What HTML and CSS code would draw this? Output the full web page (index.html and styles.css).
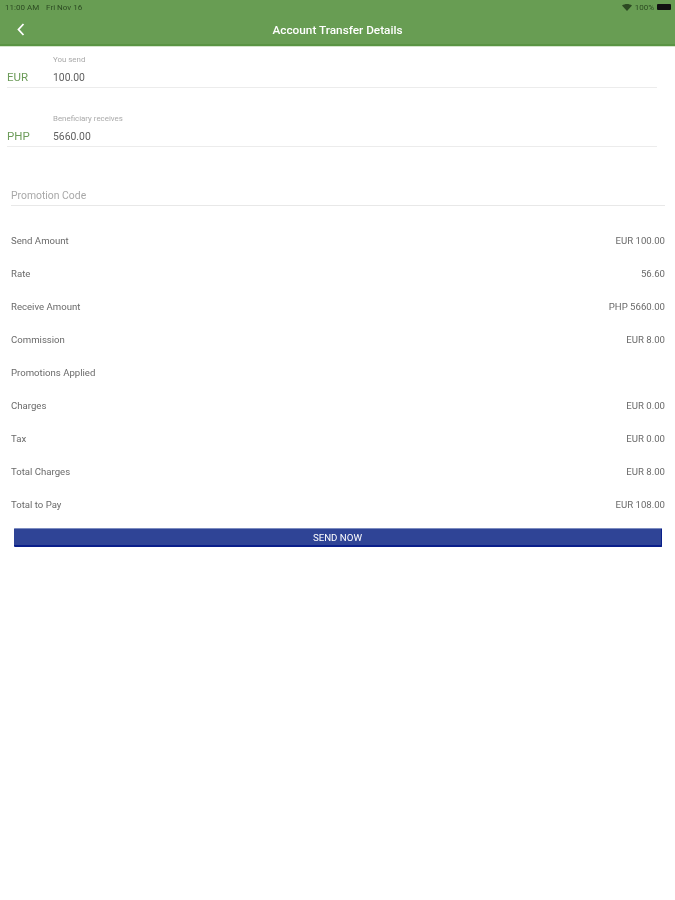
FILE: index.html
```html
<!DOCTYPE html>
<html lang="en">
<head>
<meta charset="utf-8">
<title>Account Transfer Details</title>
<link rel="stylesheet" href="styles.css">
</head>
<body>
<header class="appbar">
  <div class="status">
    <div class="status-left"><span>11:00 AM</span><span>Fri Nov 16</span></div>
    <div class="status-right">
      <svg class="wifi" width="10" height="7" viewBox="0 0 10 7"><path d="M0 1.5C3 -.5 7 -.5 10 1.5L5 7Z" fill="#2c4a22"/></svg>
      <span>100%</span>
      <span class="battery"></span>
    </div>
  </div>
  <div class="navrow">
    <svg class="back" width="8" height="13" viewBox="0 0 8 13"><path d="M6.5 1L1.5 6.5L6.5 12" fill="none" stroke="#fff" stroke-width="1.8"/></svg>
    <h1 class="title">Account Transfer Details</h1>
  </div>
</header>
<main>
  <section class="currency first">
    <span class="code">EUR</span>
    <div class="field">
      <div class="field-label">You send</div>
      <div class="field-value">100.00</div>
    </div>
  </section>
  <section class="currency second">
    <span class="code">PHP</span>
    <div class="field">
      <div class="field-label">Beneficiary receives</div>
      <div class="field-value">5660.00</div>
    </div>
  </section>
  <div class="promo">Promotion Code</div>
  <dl class="rows">
    <div class="row"><dt>Send Amount</dt><dd>EUR 100.00</dd></div>
    <div class="row"><dt>Rate</dt><dd>56.60</dd></div>
    <div class="row"><dt>Receive Amount</dt><dd>PHP 5660.00</dd></div>
    <div class="row"><dt>Commission</dt><dd>EUR 8.00</dd></div>
    <div class="row"><dt>Promotions Applied</dt><dd></dd></div>
    <div class="row"><dt>Charges</dt><dd>EUR 0.00</dd></div>
    <div class="row"><dt>Tax</dt><dd>EUR 0.00</dd></div>
    <div class="row"><dt>Total Charges</dt><dd>EUR 8.00</dd></div>
    <div class="row"><dt>Total to Pay</dt><dd>EUR 108.00</dd></div>
  </dl>
  <button class="send" type="button">SEND NOW</button>
</main>
</body>
</html>
```
FILE: styles.css
```css
* { box-sizing: border-box; }
html, body { margin: 0; padding: 0; }
body { width: 675px; height: 900px; background: #fff; font-family: Roboto, "Liberation Sans", sans-serif; overflow: hidden; filter: blur(0.4px); }
.appbar { height: 46px; background: #689d53; border-bottom: 2px solid #5a9444; box-shadow: 0 1px 0 #d5e6cd; }
.status { height: 14px; padding: 0 4px 0 5px; display: flex; justify-content: space-between; align-items: center; font-size: 8px; color: #2c4a22; }
.status-left { display: flex; gap: 7px; }
.status-right { display: flex; align-items: center; gap: 3px; }
.battery { width: 14px; height: 6px; background: #111; border-radius: 1px; }
.navrow { height: 31px; position: relative; display: flex; align-items: center; justify-content: center; }
.back { position: absolute; left: 17px; top: 9px; }
.title { margin: 0; font-size: 11.8px; font-weight: 500; color: #fff; }
.currency { display: flex; align-items: flex-end; margin-left: 7px; margin-right: 18px; height: 41px; border-bottom: 1px solid #ececec; }
.currency.first { height: 42px; }
.currency.second { margin-top: 18px; }
.code { width: 46px; font-size: 11.5px; color: #6d9c5a; padding-bottom: 3px; }
.field { flex: 1; }
.field-label { font-size: 7.9px; color: #a9a9a9; margin-bottom: 7px; }
.field-value { font-size: 10.4px; color: #606060; padding-bottom: 3px; }
.promo { margin: 42px 10px 0 11px; height: 17px; font-size: 10.4px; color: #a8a8a8; border-bottom: 1px solid #e8e8e8; }
.rows { margin: 18px 10px 0 11px; }
.row { height: 33px; display: flex; justify-content: space-between; align-items: center; font-size: 9.6px; color: #6a6a6a; }
dt, dd { margin: 0; }
.send { display: block; margin: 7px 13px 0 14px; width: 648px; height: 19px; padding: 0; background: #2f4496; color: #fff; font: 400 9.7px Roboto, "Liberation Sans", sans-serif; border: 0; border-top: 1px solid #7d8cc0; border-bottom: 2px solid #0a1f8a; border-right: 1px solid #0a1f8a; border-radius: 1px; }
```
